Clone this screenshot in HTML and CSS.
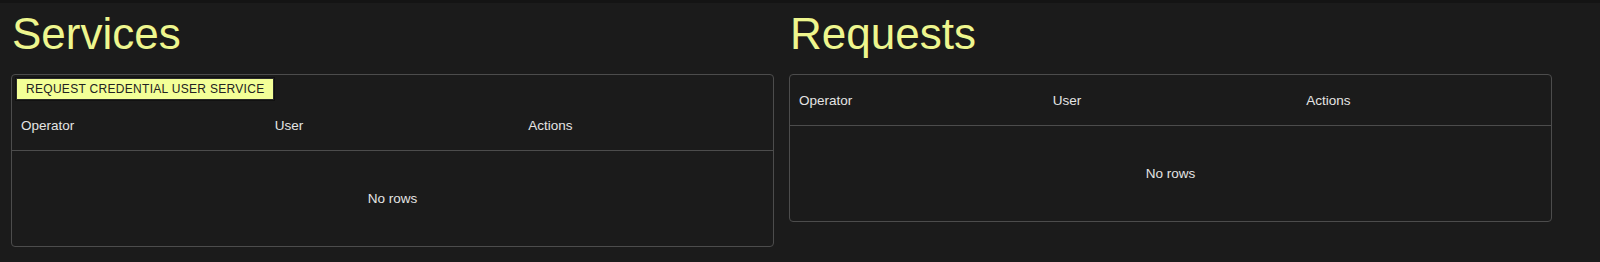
FILE: index.html
```html
<!DOCTYPE html>
<html lang="en">
<head>
    <meta charset="UTF-8">
    <title>Services</title>
    <link rel="stylesheet" href="styles.css">
</head>
<body>
    <div class="topbar"></div>
    <div class="page">
        <!-- services -->
        <section class="col">
            <h1 class="title">Services</h1>
            <div class="grid-box">
                <div class="toolbar">
                    <button class="btn">Request credential user service</button>
                </div>
                <div class="grid-head">
                    <div class="cell">Operator</div>
                    <div class="cell">User</div>
                    <div class="cell">Actions</div>
                </div>
                <div class="grid-body">No rows</div>
            </div>
        </section>
        <!-- requests -->
        <section class="col">
            <h1 class="title">Requests</h1>
            <div class="grid-box">
                <div class="grid-head">
                    <div class="cell">Operator</div>
                    <div class="cell">User</div>
                    <div class="cell">Actions</div>
                </div>
                <div class="grid-body">No rows</div>
            </div>
        </section>
    </div>
</body>
</html>
```

FILE: styles.css
```css
*{
    padding: 0;
    margin: 0;
    box-sizing: border-box;
}
body{
    background: #1b1b1b;
    font-family: "Liberation Sans", Arial, sans-serif;
    color: #e4e4e4;
}
.topbar{
    height: 3px;
    background: #141414;
}
.page{
    display: flex;
    gap: 15px;
    padding: 6px 0 0 11px;
}
.col{
    width: 763px;
    flex-shrink: 0;
}
.title{
    font-size: 44px;
    font-weight: normal;
    line-height: 50px;
    color: #eef68e;
    padding-left: 1px;
    margin-bottom: 15px;
}
.grid-box{
    border: 1px solid #4c4c4c;
    border-radius: 4px;
}
.toolbar{
    padding: 3px 4px 0;
}
.btn{
    display: block;
    height: 22px;
    padding: 0 9px;
    background: #f3ff97;
    border: 1px solid #2a2a2a;
    box-shadow: 0 0 0 1px #111;
    color: #222;
    font-family: "Liberation Sans", Arial, sans-serif;
    font-size: 12px;
    letter-spacing: 0.3px;
    text-transform: uppercase;
}
.grid-head{
    display: grid;
    grid-template-columns: 1fr 1fr 1fr;
    height: 51px;
    align-items: center;
    border-bottom: 1px solid #4c4c4c;
}
.cell{
    padding-left: 9px;
    font-size: 13.5px;
}
.grid-body{
    height: 95px;
    display: flex;
    align-items: center;
    justify-content: center;
    font-size: 13.5px;
}
```
